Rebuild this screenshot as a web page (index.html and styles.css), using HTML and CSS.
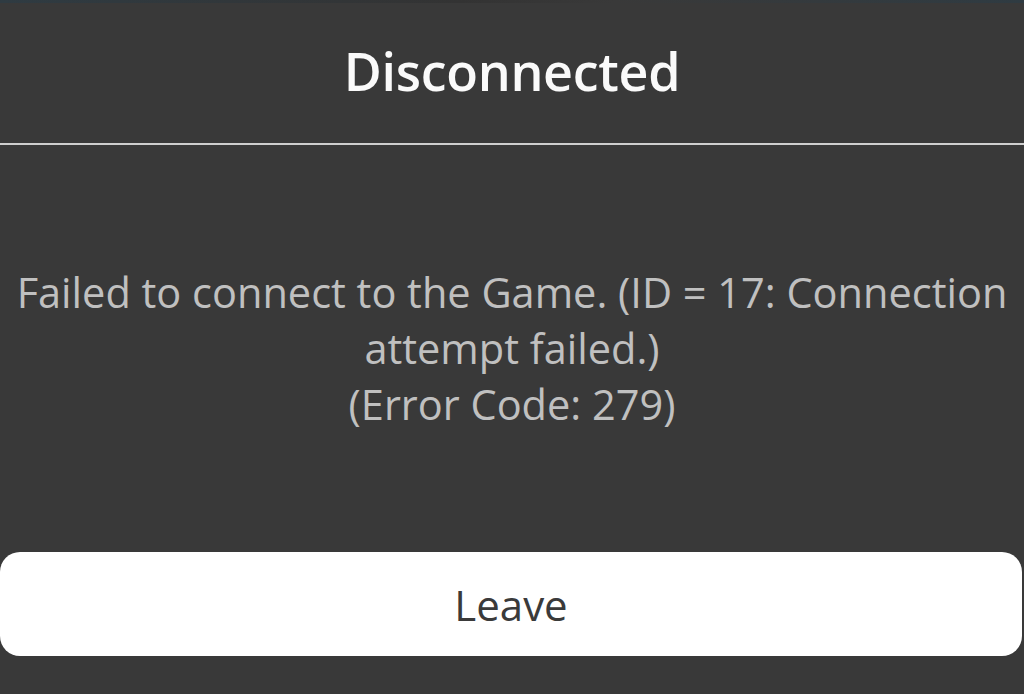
FILE: index.html
```
<!DOCTYPE html>
<html lang="en">
<head>
    <meta charset="UTF-8">
    <title>Disconnected</title>
    <link rel="stylesheet" href="styles.css">
</head>
<body>

<div class="top-strip"></div>

<div class="dialog">
    <div class="dialog-header">
        <h2>Disconnected</h2>
    </div>
    <div class="divider"></div>

    <div class="message">
        <p>Failed to connect to the Game. (ID = 17: Connection attempt failed.)</p>
        <p>(Error Code: 279)</p>
    </div>

    <button type="button" class="leave-btn">Leave</button>
</div>

</body>
</html>
```

FILE: styles.css
```
html, body { margin: 0; padding: 0; }
body { background: #393939; font-family: "Open Sans", Lato, sans-serif; width: 1024px; height: 694px; overflow: hidden; }
.top-strip { height: 3px; background: linear-gradient(90deg, #2f3b42 0%, #333 45%, #393939 60%, #2f3b42 100%); }
.dialog { display: flex; flex-direction: column; }
.dialog-header { height: 140px; padding-bottom: 6px; box-sizing: border-box; display: flex; align-items: center; justify-content: center; }
.dialog-header h2 { margin: 0; color: #fafafa; font-size: 52px; font-weight: 600; letter-spacing: -0.3px; }
.divider { height: 2px; background: #cfcfcf; }
.message { padding: 119px 4px 0; height: 280px; text-align: center; color: #c0c0c0; font-size: 41.5px; line-height: 56px; box-sizing: border-box; }
.message p { margin: 0; }
.leave-btn {
    margin: 127px 2px 0 0; height: 104px; background: #fff; color: #3a3a3a; border: none; border-radius: 20px;
    font-family: inherit; font-size: 42px; cursor: pointer;
}
```
